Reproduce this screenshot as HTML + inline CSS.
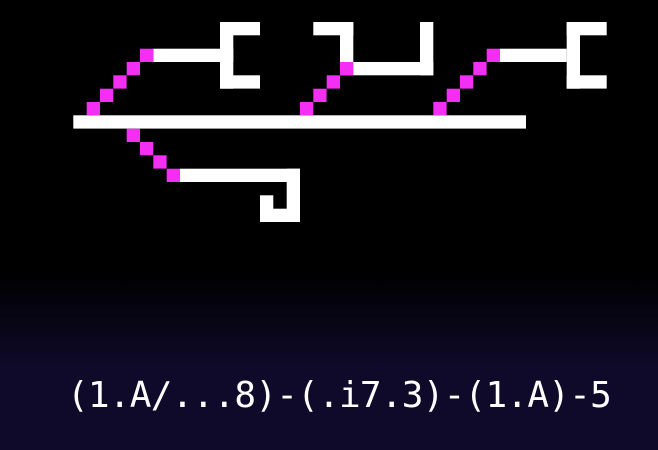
<!DOCTYPE html>
<html><head><meta charset="utf-8"><style>
html,body{margin:0;padding:0}
body{width:658px;height:450px;overflow:hidden;background:linear-gradient(to bottom,#000 0,#000 275px,#100a2a 370px,#100a2a 450px);position:relative}
svg{position:absolute;left:0;top:0}
.t{position:absolute;left:67px;top:372px;font-family:"DejaVu Sans Mono","Liberation Mono",monospace;font-size:36px;letter-spacing:-0.75px;color:#fff;white-space:pre;line-height:48px}
</style></head><body>
<svg width="658" height="450" viewBox="0 0 658 450">
<g fill="#fff">
<rect x="73.3" y="115.3" width="452.7" height="13.3"/>
<rect x="153.3" y="48.7" width="80" height="13.3"/>
<rect x="220" y="22" width="13.3" height="66.7"/>
<rect x="220" y="22" width="40" height="13.3"/>
<rect x="220" y="75.3" width="40" height="13.3"/>
<rect x="180" y="168.7" width="120" height="13.3"/>
<rect x="286.7" y="168.7" width="13.3" height="53.3"/>
<rect x="260" y="208.7" width="40" height="13.3"/>
<rect x="260" y="195.3" width="13.3" height="26.7"/>
<rect x="340" y="22" width="13.3" height="53.3"/>
<rect x="313.3" y="22" width="40" height="13.3"/>
<rect x="353.3" y="62" width="80" height="13.3"/>
<rect x="420" y="22" width="13.3" height="53.3"/>
<rect x="500" y="48.7" width="66.7" height="13.3"/>
<rect x="566.7" y="22" width="13.3" height="66.7"/>
<rect x="566.7" y="22" width="40" height="13.3"/>
<rect x="566.7" y="75.3" width="40" height="13.3"/>
</g>
<g fill="#f22ff2">
<rect x="86.7" y="102" width="13.3" height="13.3"/>
<rect x="100" y="88.7" width="13.3" height="13.3"/>
<rect x="113.3" y="75.3" width="13.3" height="13.3"/>
<rect x="126.7" y="62" width="13.3" height="13.3"/>
<rect x="140" y="48.7" width="13.3" height="13.3"/>
<rect x="126.7" y="128.7" width="13.3" height="13.3"/>
<rect x="140" y="142" width="13.3" height="13.3"/>
<rect x="153.3" y="155.3" width="13.3" height="13.3"/>
<rect x="166.7" y="168.7" width="13.3" height="13.3"/>
<rect x="300" y="102" width="13.3" height="13.3"/>
<rect x="313.3" y="88.7" width="13.3" height="13.3"/>
<rect x="326.7" y="75.3" width="13.3" height="13.3"/>
<rect x="340" y="62" width="13.3" height="13.3"/>
<rect x="433.3" y="102" width="13.3" height="13.3"/>
<rect x="446.7" y="88.7" width="13.3" height="13.3"/>
<rect x="460" y="75.3" width="13.3" height="13.3"/>
<rect x="473.3" y="62" width="13.3" height="13.3"/>
<rect x="486.7" y="48.7" width="13.3" height="13.3"/>
</g>
</svg>
<div class="t">(1.A/...8)-(.i7.3)-(1.A)-5</div>
</body></html>
